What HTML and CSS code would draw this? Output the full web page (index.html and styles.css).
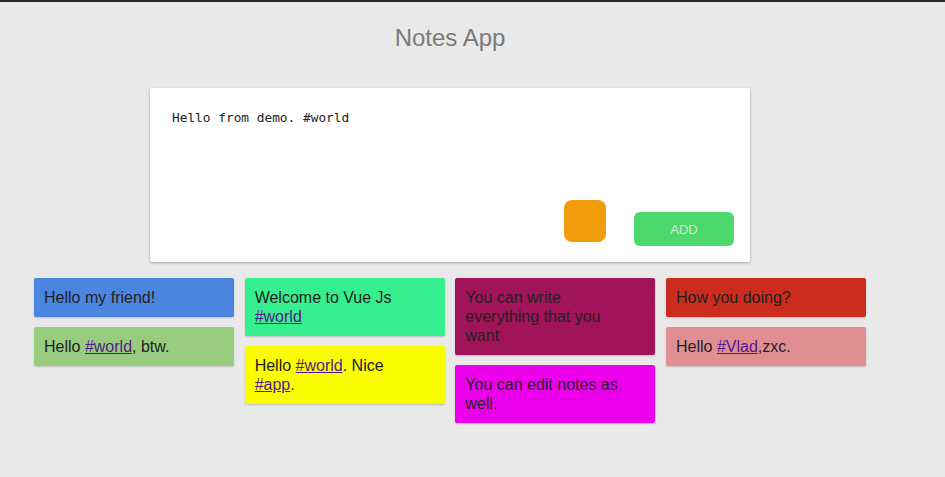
FILE: index.html
```html
<!DOCTYPE html>
<html lang="en">
<head>
<meta charset="utf-8">
<title>Notes App</title>
<link rel="stylesheet" href="styles.css">
</head>
<body>
<div class="app">
  <h1 class="title">Notes App</h1>
  <div class="editor">
    <div class="editor-text">Hello from demo. #world</div>
    <div class="editor-actions">
      <div class="color-pick"></div>
      <button class="add-btn">ADD</button>
    </div>
  </div>
  <div class="notes">
    <div class="col">
      <div class="note c-blue">Hello my friend!</div>
      <div class="note c-lgreen">Hello <a href="#">#world</a>, btw.</div>
    </div>
    <div class="col">
      <div class="note c-teal">Welcome to Vue Js <a href="#">#world</a></div>
      <div class="note c-yellow">Hello <a href="#">#world</a>. Nice <a href="#">#app</a>.</div>
    </div>
    <div class="col">
      <div class="note c-plum">You can write everything that you want</div>
      <div class="note c-magenta">You can edit notes as well.</div>
    </div>
    <div class="col">
      <div class="note c-red">How you doing?</div>
      <div class="note c-pink">Hello <a href="#">#Vlad</a>,zxc.</div>
    </div>
  </div>
</div>
</body>
</html>
```
FILE: styles.css
```css
html, body {
  margin: 0;
  padding: 0;
}
body {
  background: #e9e9e9;
  border-top: 2px solid #2b2b2b;
  height: 475px;
  font-family: "Liberation Sans", Arial, sans-serif;
}
.app {
  display: flex;
  flex-direction: column;
}
.title {
  margin: 0 0 0 150px;
  width: 600px;
  padding-top: 22px;
  height: 86px;
  box-sizing: border-box;
  text-align: center;
  font-size: 24px;
  font-weight: normal;
  line-height: 28px;
  color: #7a7a7a;
}
.editor {
  margin-left: 150px;
  width: 600px;
  box-sizing: border-box;
  background: #fff;
  padding: 22px 16px 16px 22px;
  box-shadow: 0 1px 3px rgba(0, 0, 0, 0.3);
  border-radius: 2px;
  display: flex;
  flex-direction: column;
}
.editor-text {
  height: 90px;
  font-family: "DejaVu Sans Mono", "Liberation Mono", monospace;
  font-size: 12.8px;
  line-height: 15px;
  color: #222;
}
.editor-actions {
  display: flex;
  justify-content: flex-end;
  align-items: flex-end;
  gap: 28px;
  height: 46px;
}
.color-pick {
  width: 42px;
  height: 42px;
  border-radius: 8px;
  background: #f39c0b;
  margin-bottom: 4px;
}
.add-btn {
  width: 100px;
  height: 34px;
  border: none;
  border-radius: 6px;
  background: #4cd86b;
  color: #d6e8d6;
  font-family: "Liberation Sans", Arial, sans-serif;
  font-size: 13px;
  padding: 0;
}
.notes {
  display: flex;
  gap: 10.67px;
  margin-left: 34px;
  margin-top: 16px;
  align-items: flex-start;
}
.col {
  width: 200px;
  display: flex;
  flex-direction: column;
  gap: 10px;
}
.note {
  padding: 10px 30px 10px 10px;
  font-size: 16px;
  line-height: 19px;
  color: #222;
  border-radius: 2px;
  box-shadow: 0 1px 2px rgba(0, 0, 0, 0.2);
}
.note a {
  color: #551a8b;
  text-decoration: underline;
}
.c-blue { background: #4c85e0; }
.c-lgreen { background: #98cc7e; }
.c-teal { background: #36ef8e; }
.c-yellow { background: #fdfd02; }
.c-plum { background: #a2145a; }
.c-magenta { background: #ec00ec; }
.c-red { background: #cc2c1d; }
.c-pink { background: #e18e93; }
```
